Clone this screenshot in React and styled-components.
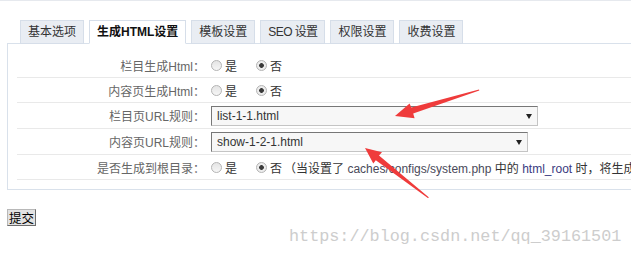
import React from "react";
import styled, { createGlobalStyle } from "styled-components";

const GlobalStyle = createGlobalStyle`
  html, body { margin: 0; padding: 0; background: #fff; overflow: hidden; }
  body {
    font-family: "Liberation Sans", "Noto Sans CJK SC", sans-serif;
    font-size: 12px;
    color: #333;
  }
`;

const Page = styled.div`
  position: relative;
  width: 631px;
  height: 257px;
  overflow: hidden;
  box-sizing: border-box;
  border-top: 1px solid #e6e9ee;
  padding: 19px 0 0 7px;
`;

const TabBar = styled.div`
  display: flex;
  gap: 5px;
  padding-left: 13px;
  margin-bottom: -1px;
  position: relative;
  z-index: 1;
`;

const Tab = styled.div`
  box-sizing: border-box;
  height: 24px;
  line-height: 22px;
  padding: 0 7px;
  border: 1px solid #d6dee9;
  border-bottom-color: ${(p) => (p.$active ? "#fff" : "#d6dee9")};
  background: ${(p) => (p.$active ? "#fff" : "#e9edf3")};
  color: ${(p) => (p.$active ? "#111" : "#333")};
  font-weight: ${(p) => (p.$active ? "bold" : "normal")};
  letter-spacing: ${(p) => (p.$tight ? "-0.6px" : "0")};
  white-space: nowrap;
`;

const Panel = styled.div`
  width: 760px;
  border: 1px solid #d9e1eb;
  padding: 9px 0 9px 9px;
`;

const Row = styled.div`
  display: grid;
  grid-template-columns: 194px 1fr;
  align-items: center;
  min-height: 24px;
  border-bottom: 1px solid #e9e9e9;
`;

const Label = styled.div`
  text-align: right;
  padding-right: 6px;
  color: #666;
  white-space: nowrap;
`;

const Field = styled.div`
  display: flex;
  align-items: center;
  white-space: nowrap;
  color: #333;
`;

const Choice = styled.label`
  display: inline-flex;
  align-items: center;
  margin-right: ${(p) => (p.$last ? "2px" : "19px")};
`;

const Radio = styled.input.attrs({ type: "radio" })`
  appearance: none;
  -webkit-appearance: none;
  box-sizing: border-box;
  width: 11px;
  height: 11px;
  margin: 0 3px 0 0;
  border-radius: 50%;
  border: 1px solid #b4b4b4;
  background: linear-gradient(#e4e4e4, #f6f6f6);
  &:checked {
    background: radial-gradient(circle, #3a3a3a 0, #3a3a3a 2px, #ececec 2.7px);
  }
`;

const Note = styled.span`
  color: #333;
`;

const Code = styled.span`
  color: ${(p) => p.$color};
`;

const SelectWrap = styled.div`
  position: relative;
  width: ${(p) => p.$width}px;
  margin: 3px 0 2px;
  &::after {
    content: "";
    position: absolute;
    right: 6px;
    top: 8px;
    border-left: 3.5px solid transparent;
    border-right: 3.5px solid transparent;
    border-top: 5px solid #222;
    pointer-events: none;
  }
`;

const Select = styled.select`
  appearance: none;
  -webkit-appearance: none;
  display: block;
  box-sizing: border-box;
  width: 100%;
  height: 20px;
  margin: 0;
  padding: 0 0 0 5px;
  border: 1px solid;
  border-color: #777 #c4c4c4 #c4c4c4 #777;
  border-radius: 0;
  background: #f7f7f7;
  font-family: "Liberation Sans", "Noto Sans CJK SC", sans-serif;
  font-size: 12px;
  color: #333;
  outline: none;
`;

const Submit = styled.button`
  display: block;
  margin-top: 19px;
  box-sizing: border-box;
  width: 29px;
  height: 17px;
  padding: 0;
  border: 1px solid;
  border-color: #b8b8b8 #6c6c6c #6c6c6c #b8b8b8;
  border-radius: 0;
  background: #e2e2e2;
  font-family: "Noto Sans CJK SC", sans-serif;
  font-size: 12.5px;
  line-height: 14px;
  color: #000;
`;

const Watermark = styled.div`
  position: absolute;
  left: 289px;
  top: 226px;
  font-family: "Liberation Mono", monospace;
  font-size: 16.8px;
  color: #cdcdcd;
  white-space: nowrap;
  pointer-events: none;
`;

const Overlay = styled.svg`
  position: absolute;
  left: 0;
  top: 0;
  pointer-events: none;
`;

const tabs = ["基本选项", "生成HTML设置", "模板设置", "SEO 设置", "权限设置", "收费设置"];

function YesNo({ name, note }) {
  return (
    <Field>
      <Choice>
        <Radio name={name} value="1" />是
      </Choice>
      <Choice $last>
        <Radio name={name} value="0" defaultChecked />否
      </Choice>
      {note}
    </Field>
  );
}

export default function App() {
  return (
    <>
      <GlobalStyle />
      <Page>
        <TabBar>
          {tabs.map((t, i) => (
            <Tab key={t} $active={i === 1} $tight={i === 3}>
              {t}
            </Tab>
          ))}
        </TabBar>
        <Panel>
          <Row>
            <Label>栏目生成Html：</Label>
            <YesNo name="ishtml" />
          </Row>
          <Row>
            <Label>内容页生成Html：</Label>
            <YesNo name="content_ishtml" />
          </Row>
          <Row>
            <Label>栏目页URL规则：</Label>
            <Field>
              <SelectWrap $width={327}>
                <Select defaultValue="list">
                  <option value="list">list-1-1.html</option>
                </Select>
              </SelectWrap>
            </Field>
          </Row>
          <Row>
            <Label>内容页URL规则：</Label>
            <Field>
              <SelectWrap $width={317}>
                <Select defaultValue="show">
                  <option value="show">show-1-2-1.html</option>
                </Select>
              </SelectWrap>
            </Field>
          </Row>
          <Row>
            <Label>是否生成到根目录：</Label>
            <YesNo
              name="create_to_html_root"
              note={
                <Note>
                  （当设置了 <Code $color="#4a4a5a">caches/configs/system.php</Code> 中的{" "}
                  <Code $color="#3a3a80">html_root</Code> 时，将生成的静态文件存放到根目录）
                </Note>
              }
            />
          </Row>
        </Panel>
        <Submit type="button">提交</Submit>
        <Watermark>https://blog.csdn.net/qq_39161501</Watermark>
        <Overlay width="631" height="257" viewBox="0 0 631 257">
          <polygon
            fill="#ef3b3b"
            points="479,88.6 411.3,106.6 409.6,102.6 395,115 414.6,117.3 413.2,112.4 479.3,89.6"
          />
          <polygon
            fill="#ef3b3b"
            points="365,147 382,151.2 379,154.6 429,196.5 427.8,197 375.8,159.2 373.3,162.6"
          />
        </Overlay>
      </Page>
    </>
  );
}
